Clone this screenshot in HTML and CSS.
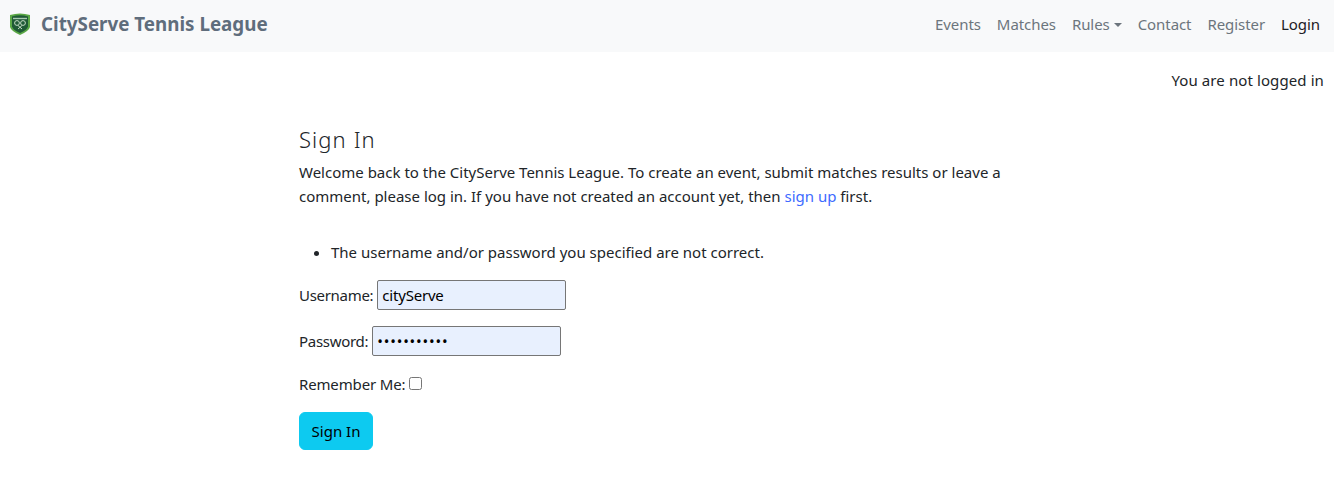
FILE: index.html
```html
<!DOCTYPE html>
<html lang="en">
<head>
<meta charset="utf-8">
<title>Sign In</title>
<link rel="stylesheet" href="styles.css">
</head>
<body>
<nav class="navbar">
  <a class="brand" href="#">
    <svg class="logo" width="22" height="24" viewBox="0 0 22 24" aria-hidden="true">
      <path d="M1 3 Q11 0 21 3 L21 15 Q20 19 11 23 Q2 19 1 15 Z" fill="#5aa845"/>
      <path d="M3 4.5 Q11 2 19 4.5 L19 14.5 Q18 18 11 21 Q4 18 3 14.5 Z" fill="#1f5a36"/>
      <path d="M4 6.5 H18" stroke="#a9c9b0" stroke-width="1.4"/>
      <circle cx="8" cy="11" r="2.4" fill="none" stroke="#c5dcc5" stroke-width="1"/>
      <circle cx="14" cy="11" r="2.4" fill="none" stroke="#c5dcc5" stroke-width="1"/>
      <path d="M9 13.5 L13 17 M13 13.5 L9 17" stroke="#c5dcc5" stroke-width="1"/>
    </svg>
    <span>CityServe Tennis League</span>
  </a>
  <ul class="nav">
    <li><a href="#">Events</a></li>
    <li><a href="#">Matches</a></li>
    <li><a href="#" class="caret">Rules</a></li>
    <li><a href="#">Contact</a></li>
    <li><a href="#">Register</a></li>
    <li><a href="#" class="active">Login</a></li>
  </ul>
</nav>
<p class="status">You are not logged in</p>
<main class="content">
  <h1>Sign In</h1>
  <p class="intro">Welcome back to the CityServe Tennis League. To create an event, submit matches results or leave a comment, please log in. If you have not created an account yet, then <a href="#">sign up</a> first.</p>
  <ul class="errors">
    <li>The username and/or password you specified are not correct.</li>
  </ul>
  <form class="login">
    <p class="field"><label for="u">Username:</label><input id="u" type="text" value="cityServe"></p>
    <p class="field"><label for="p">Password:</label><input id="p" type="password" value="cityserve12"></p>
    <p class="field remember"><label for="r">Remember Me:</label><input id="r" type="checkbox"></p>
    <button type="button" class="btn">Sign In</button>
  </form>
</main>
</body>
</html>
```
FILE: styles.css
```css
* { box-sizing: border-box; }
html, body { margin: 0; padding: 0; }
body {
  font-family: "Noto Sans", "Open Sans", sans-serif;
  font-size: 15px;
  line-height: 24px;
  color: #212529;
  background: #fff;
}
a { text-decoration: none; }
.navbar {
  display: flex;
  align-items: center;
  justify-content: space-between;
  height: 52px;
  padding: 0 14px 4px 9px;
  background: #f8f9fa;
}
.brand {
  display: flex;
  align-items: center;
  gap: 10px;
  color: #5f6d7c;
  font-size: 18.8px;
  font-weight: 700;
}
.logo { display: block; margin-bottom: 0; }
.nav { display: flex; gap: 16px; margin: 0; padding: 0; list-style: none; letter-spacing: -0.07px; }
.nav a { color: #6c757d; }
.nav a.active { color: #1d2024; }
.caret::after {
  content: "";
  display: inline-block;
  margin-left: 4px;
  vertical-align: 3px;
  border-top: 4.8px solid;
  border-left: 4.3px solid transparent;
  border-right: 4.3px solid transparent;
}
.status { margin: 0; padding: 16px 10px 0 0; text-align: right; letter-spacing: 0.1px; }
.content { width: 736px; margin: 0 0 0 299px; padding-top: 31px; }
h1 {
  margin: 0 0 5px;
  font-size: 22px;
  font-weight: 300;
  line-height: 32px;
  letter-spacing: 1.1px;
}
.intro { margin: 0 0 32px; }
.intro a { color: #3d6bff; }
.errors { margin: 0 0 16px; padding-left: 32px; }
.field { display: flex; align-items: center; gap: 4px; margin: 0 0 16px; }
.field label { letter-spacing: -0.3px; }
.field input[type="text"], .field input[type="password"] {
  width: 189px;
  height: 30px;
  padding: 1px 4px;
  border: 1px solid #767676;
  border-radius: 2px;
  background: #e8f0fe;
  font: inherit;
  color: #000;
}
.field input[type="text"] { letter-spacing: -0.2px; }
.field input[type="password"] { letter-spacing: 0.85px; }
.remember label { letter-spacing: -0.15px; }
.remember input { width: 13px; height: 13px; margin: -2px 0 0; }
.btn {
  display: block;
  height: 38px;
  width: 74px;
  padding: 0;
  border: 1px solid #0dcaf0;
  border-radius: 6px;
  background: #0dcaf0;
  color: #000;
  font: inherit;
}
```
